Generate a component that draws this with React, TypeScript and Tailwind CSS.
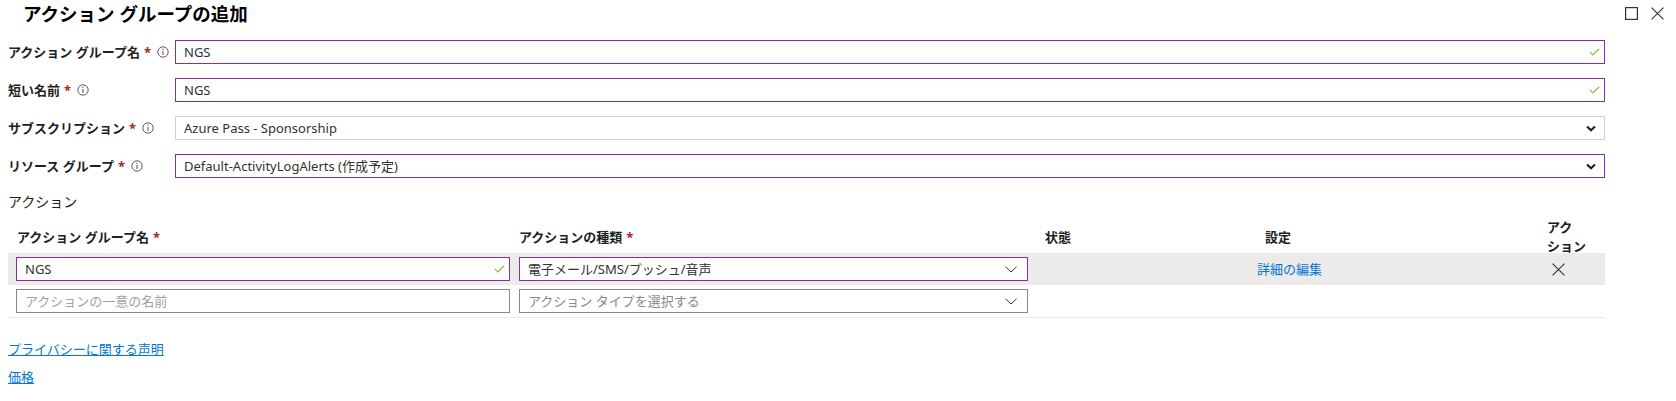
import type { ReactNode } from "react";

const FONT = "font-['Noto_Sans','Noto_Sans_CJK_JP',sans-serif]";
const COLS = "grid grid-cols-[503px_526px_212px_290px_1fr] pl-[8px]";

function InfoIcon() {
  return (
    <svg width="12" height="12" viewBox="0 0 12 12" className="shrink-0">
      <circle cx="6" cy="6" r="5.2" fill="none" stroke="#605e5c" strokeWidth="1" />
      <line x1="6" y1="5" x2="6" y2="9" stroke="#605e5c" strokeWidth="1.1" />
      <circle cx="6" cy="3.3" r="0.7" fill="#605e5c" />
    </svg>
  );
}

function Check() {
  return (
    <svg width="11" height="8" viewBox="0 0 11 8" className="shrink-0">
      <path d="M0.8 3.8 L3.8 6.8 L10.2 0.8" fill="none" stroke="#8cc05a" strokeWidth="1.2" />
    </svg>
  );
}

function ChevronBold() {
  return (
    <svg width="10" height="7" viewBox="0 0 10 7" className="shrink-0">
      <path d="M1 1.5 L5 5.3 L9 1.5" fill="none" stroke="#1b1a19" strokeWidth="2" />
    </svg>
  );
}

function ChevronThin() {
  return (
    <svg width="12" height="7" viewBox="0 0 12 7" className="shrink-0">
      <path d="M0.5 0.8 L6 6 L11.5 0.8" fill="none" stroke="#323130" strokeWidth="1" />
    </svg>
  );
}

function CloseIcon({ size }: { size: number }) {
  return (
    <svg width={size} height={size} viewBox="0 0 12 12" className="shrink-0">
      <path d="M0.5 0.5 L11.5 11.5 M11.5 0.5 L0.5 11.5" fill="none" stroke="#323130" strokeWidth="1" />
    </svg>
  );
}

function FormRow({ label, children }: { label: string; children: ReactNode }) {
  return (
    <div className="grid h-[24px] grid-cols-[167px_1fr] items-center">
      <div className="flex items-center text-[13px] font-bold leading-[18px] text-[#201f1e]">
        <span>{label}</span>
        <span className="ml-[4px] text-[#a4262c]">*</span>
        <span className="ml-[6px] flex">
          <InfoIcon />
        </span>
      </div>
      {children}
    </div>
  );
}

function Field({
  value,
  tone,
  icon,
}: {
  value: string;
  tone: "purple" | "gray";
  icon: "check" | "chevron";
}) {
  return (
    <div
      className={`flex h-[24px] items-center justify-between border pl-[8px] text-[13px] leading-[18px] text-[#323130] ${
        tone === "purple" ? "border-[#8a2ca8]" : "border-[#d2d0ce]"
      } ${icon === "check" ? "pr-[4px]" : "pr-[8px]"}`}
    >
      <span>{value}</span>
      {icon === "check" ? <Check /> : <ChevronBold />}
    </div>
  );
}

export default function App() {
  return (
    <div className={`h-[401px] w-[1676px] overflow-hidden bg-white text-[#323130] ${FONT}`}>
      <div className="flex h-[27px] items-center justify-between pl-[23px] pr-[12px]">
        <h1 className="text-[18.5px] font-bold leading-[27px] text-black">アクション グループの追加</h1>
        <div className="flex items-center gap-[13px]">
          <svg width="13" height="13" viewBox="0 0 13 13">
            <rect x="0.6" y="0.6" width="11.8" height="11.8" fill="none" stroke="#323130" strokeWidth="1.2" />
          </svg>
          <CloseIcon size={13} />
        </div>
      </div>

      <div className="ml-[8px] mt-[13px] w-[1597px]">
        <div className="flex flex-col gap-[14px]">
          <FormRow label="アクション グループ名">
            <Field value="NGS" tone="purple" icon="check" />
          </FormRow>
          <FormRow label="短い名前">
            <Field value="NGS" tone="purple" icon="check" />
          </FormRow>
          <FormRow label="サブスクリプション">
            <Field value="Azure Pass - Sponsorship" tone="gray" icon="chevron" />
          </FormRow>
          <FormRow label="リソース グループ">
            <Field value="Default-ActivityLogAlerts (作成予定)" tone="purple" icon="chevron" />
          </FormRow>
        </div>

        <div className="mt-[14px] text-[14px] leading-[20px] text-[#201f1e]">アクション</div>

        <div className="mt-[6px]">
          <div className={`${COLS} h-[35px] items-center text-[13px] font-bold leading-[18px] text-[#201f1e]`}>
            <div className="pl-[1px]">
              アクション グループ名<span className="ml-[4px] text-[#a4262c]">*</span>
            </div>
            <div>
              アクションの種類<span className="ml-[4px] text-[#a4262c]">*</span>
            </div>
            <div>状態</div>
            <div className="pl-[8px]">設定</div>
            <div className="self-start leading-[19px]">
              アク
              <br />
              ション
            </div>
          </div>

          <div className={`${COLS} h-[32px] items-center bg-[#edebe9] text-[13px] leading-[18px]`}>
            <div className="flex h-[24px] w-[494px] items-center justify-between border border-[#8a2ca8] bg-white pl-[8px] pr-[4px]">
              <span>NGS</span>
              <Check />
            </div>
            <div className="flex h-[24px] w-[509px] items-center justify-between border border-[#8a2ca8] bg-white pl-[8px] pr-[10px]">
              <span>電子メール/SMS/プッシュ/音声</span>
              <ChevronThin />
            </div>
            <div />
            <div className="text-[#0078d4]">詳細の編集</div>
            <div className="ml-[5px] flex">
              <CloseIcon size={13} />
            </div>
          </div>

          <div className={`${COLS} h-[33px] items-center border-b border-[#edebe9] text-[13px] leading-[18px]`}>
            <div className="flex h-[24px] w-[494px] items-center border border-[#8a8886] pl-[8px] text-[#a19f9d]">
              アクションの一意の名前
            </div>
            <div className="flex h-[24px] w-[509px] items-center justify-between border border-[#8a8886] pl-[8px] pr-[10px]">
              <span className="text-[#8a8886]">アクション タイプを選択する</span>
              <ChevronThin />
            </div>
            <div />
            <div />
            <div />
          </div>
        </div>

        <div className="mt-[22px] text-[13px] leading-[18px]">
          <a href="#" className="text-[#0078d4] underline">
            プライバシーに関する声明
          </a>
        </div>
        <div className="mt-[10px] text-[13px] leading-[18px]">
          <a href="#" className="text-[#0078d4] underline">
            価格
          </a>
        </div>
      </div>
    </div>
  );
}
